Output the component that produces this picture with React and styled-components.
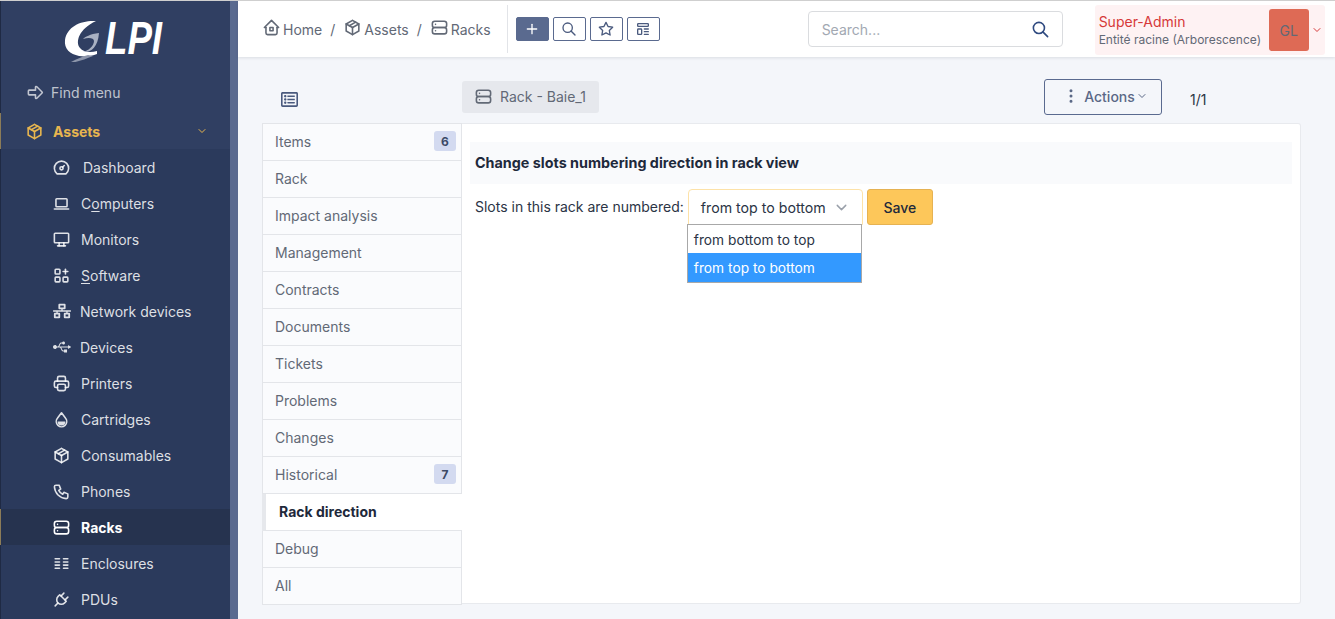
import React from 'react';
import styled, { createGlobalStyle } from 'styled-components';
import {
  TbHome2, TbPackage, TbServer, TbArrowBigRight, TbDashboard, TbDeviceLaptop, TbDeviceDesktop,
  TbApps, TbPrinter, TbPhone, TbColumns, TbPlug, TbSearch, TbStar,
  TbTemplate, TbDotsVertical, TbChevronDown, TbPlus,
} from 'react-icons/tb';
import { FaUsb, FaNetworkWired, FaRegListAlt } from 'react-icons/fa';

const GlobalStyle = createGlobalStyle`
  html, body { margin: 0; height: 100%; overflow: hidden; }
  body { font-family: Inter, "Liberation Sans", sans-serif; font-size: 14px; color: #1e293b; background: #f4f6fa; }
  * { box-sizing: border-box; }
`;

const Page = styled.div`
  display: flex;
  height: 619px;
  border-top: 1px solid #cfcfcf;
  overflow: hidden;
`;

// ==================== Sidebar ====================
const Sidebar = styled.aside`
  width: 238px;
  flex: none;
  background: #303f62;
  border-left: 1px solid #1f2a44;
  border-right: 8px solid #5a6a8f;
  display: flex;
  flex-direction: column;
`;

const LogoBox = styled.div`
  height: 73px;
  display: flex;
  align-items: flex-start;
  padding: 17px 0 0 63px;
`;

const LogoText = styled.span`
  font-family: "Liberation Sans", sans-serif;
  font-style: italic;
  font-weight: 700;
  font-size: 47px;
  line-height: 40px;
  color: #fff;
  margin-left: -1px;
  transform: scaleX(0.78);
  transform-origin: left;
`;

const FindMenu = styled.div`
  height: 37px;
  display: flex;
  align-items: center;
  gap: 6px;
  padding-left: 25px;
  color: rgba(255, 255, 255, 0.7);
  font-size: 14px;
  svg { font-size: 19px; }
`;

const SectionRow = styled.div`
  height: 36px;
  margin-top: 2px;
  margin-left: -1px;
  display: flex;
  align-items: center;
  gap: 9px;
  padding: 0 22px 0 24px;
  color: #e8b64f;
  font-weight: 700;
  font-size: 14px;
  border-left: 1px solid #8c7c58;
  svg:first-child { font-size: 19px; }
  svg:last-child { margin-left: auto; font-size: 12px; }
`;

const SubMenu = styled.div`
  flex: 1;
  background: #2b3a5c;
`;

const MenuItem = styled.div`
  height: 36px;
  display: flex;
  align-items: center;
  padding-left: ${p => p.$pad || 51}px;
  gap: ${p => p.$gap || 10}px;
  font-size: 14px;
  color: ${p => (p.$active ? '#fff' : 'rgba(255, 255, 255, 0.85)')};
  font-weight: ${p => (p.$active ? 700 : 400)};
  background: ${p => (p.$active ? '#26334f' : 'transparent')};
  border-left: ${p => (p.$active ? '1px solid #8c7c58' : 'none')};
  margin-left: ${p => (p.$active ? '-1px' : '0')};
  svg { font-size: ${p => p.$iconSize || 19}px; flex: none; }
  u { text-underline-offset: 2px; }
`;

const DropletIcon = () => (
  <svg viewBox="0 0 24 24" width="1em" height="1em" fill="none" stroke="currentColor" strokeWidth="2" strokeLinejoin="round">
    <path d="M12 3.5 L17.2 10.5 A6.6 6.6 0 1 1 6.8 10.5 Z" />
    <path d="M7 14.5 H17 A5 5 0 0 1 12 19.5 A5 5 0 0 1 7 14.5 Z" fill="currentColor" stroke="none" />
  </svg>
);

// ==================== Header ====================
const Content = styled.div`
  flex: 1;
  min-width: 0;
  display: flex;
  flex-direction: column;
`;

const Header = styled.header`
  height: 56px;
  flex: none;
  background: #fff;
  box-shadow: 0 1px 3px rgba(30, 41, 59, 0.12);
  display: flex;
  align-items: center;
  padding-left: 24px;
  position: relative;
`;

const Breadcrumb = styled.nav`
  display: flex;
  align-items: center;
  color: #626976;
  font-size: 14px;
  gap: 8px;
  height: 48px;
  padding-right: 16px;
  border-right: 1px solid #e2e4e8;
  svg { font-size: 19px; margin-right: 2px; position: relative; top: -2px; }
`;

const Crumb = styled.span`
  display: inline-flex;
  align-items: center;
`;

const Tools = styled.div`
  display: flex;
  gap: 4px;
  margin-left: 8px;
`;

const ToolButton = styled.button`
  width: 33px;
  height: 24px;
  padding: 0;
  display: flex;
  align-items: center;
  justify-content: center;
  border-radius: 2px;
  border: 1px solid #5a6a8f;
  background: ${p => (p.$solid ? '#5a6a8f' : '#fff')};
  color: ${p => (p.$solid ? '#fff' : '#4a5a7e')};
  font-size: 16px;
`;

const SearchBox = styled.div`
  width: 255px;
  height: 36px;
  margin-left: 148px;
  border: 1px solid #dadcdf;
  border-radius: 4px;
  display: flex;
  align-items: center;
  justify-content: space-between;
  padding: 0 12px 0 13px;
  color: #a2a8b2;
  font-size: 14px;
  svg { font-size: 19px; color: #2f4a80; }
`;

const UserBox = styled.div`
  width: 230px;
  height: 50px;
  margin: 2px 0 0 32px;
  background: #fef2f3;
  border-radius: 3px;
  display: flex;
  align-items: center;
  padding-left: 4px;
`;

const UserText = styled.div`
  flex: 1;
  display: flex;
  flex-direction: column;
  gap: 1px;
  white-space: nowrap;
`;

const UserName = styled.div`
  color: #d63939;
  font-size: 14px;
  line-height: 18px;
`;

const UserEntity = styled.div`
  color: #626976;
  font-size: 12px;
  line-height: 15px;
`;

const Avatar = styled.div`
  width: 40px;
  height: 42px;
  background: #de6a55;
  border-radius: 3px;
  color: #626976;
  font-size: 14px;
  display: flex;
  align-items: center;
  justify-content: center;
`;

const UserCaret = styled.span`
  width: 16px;
  display: flex;
  justify-content: center;
  color: #d63939;
  font-size: 12px;
`;

// ==================== Main ====================
const Main = styled.main`
  flex: 1;
  padding: 22px 34px 0 24px;
  display: flex;
  flex-direction: column;
`;

const ItemBar = styled.div`
  height: 36px;
  margin-bottom: 8px;
  display: flex;
  align-items: center;
`;

const ListToggle = styled.div`
  width: 200px;
  padding: 4px 0 0 19px;
  color: #4a5a7e;
  font-size: 17px;
  display: flex;
`;

const ItemTitle = styled.div`
  height: 32px;
  width: 137px;
  background: #e6e8ed;
  border-radius: 3px;
  display: flex;
  align-items: center;
  gap: 7px;
  padding: 0 0 1px 12px;
  color: #626976;
  font-size: 14px;
  svg { font-size: 19px; }
`;

const ActionsButton = styled.button`
  width: 118px;
  height: 36px;
  margin-left: 445px;
  background: transparent;
  border: 1px solid #5a6a8f;
  border-radius: 3px;
  color: #5a6886;
  font: 500 14px Inter, sans-serif;
  display: flex;
  align-items: center;
  justify-content: center;
  padding: 0 0 2px 4px;
  svg:first-child { font-size: 18px; margin-right: 4px; }
  svg:last-child { font-size: 12px; margin-left: 1px; }
`;

const Pager = styled.div`
  margin-left: 28px;
  font-size: 14px;
  color: #2b3445;
  padding-top: 5px;
`;

const TabLayout = styled.div`
  display: flex;
`;

const TabList = styled.div`
  width: 200px;
  flex: none;
  border-radius: 3px 0 0 3px;
`;

const Tab = styled.div`
  height: ${p => (p.$first ? 38 : 37)}px;
  display: flex;
  align-items: center;
  justify-content: space-between;
  background: ${p => (p.$active ? '#fff' : '#fafbfd')};
  color: ${p => (p.$active ? '#1e293b' : '#626976')};
  font-weight: ${p => (p.$active ? 700 : 400)};
  padding: 0 5px 2px ${p => (p.$active ? 13 : 12)}px;
  border-left: ${p => (p.$active ? '4px solid #e6e8ec' : '1px solid #e3e5e9')};
  border-bottom: 1px solid #e3e5e9;
  border-top: ${p => (p.$first ? '1px solid #e3e5e9' : 'none')};
  border-right: ${p => (p.$active ? 'none' : '1px solid #e3e5e9')};
`;

const Badge = styled.span`
  min-width: 22px;
  height: 20px;
  border-radius: 3px;
  background: #d3daf0;
  color: #3c4a66;
  font-size: 12px;
  font-weight: 700;
  display: flex;
  align-items: center;
  justify-content: center;
`;

const Panel = styled.section`
  width: 839px;
  height: 481px;
  background: #fff;
  border: 1px solid #e8eaee;
  border-left: none;
  border-radius: 0 3px 3px 0;
  padding: 18px 8px 0;
`;

const PanelTitle = styled.h3`
  margin: 0;
  height: 42px;
  background: #f9fafc;
  padding: 0 0 2px 5px;
  display: flex;
  align-items: center;
  font-size: 14.35px;
  font-weight: 700;
  color: #1e293b;
`;

const FormRow = styled.div`
  display: flex;
  align-items: flex-start;
  margin-top: 5px;
  padding-left: 5px;
`;

const FormLabel = styled.label`
  line-height: 36px;
  color: #2b3445;
  margin-right: 4px;
`;

const SelectWrap = styled.div`
  position: relative;
  width: 175px;
  margin-right: 4px;
`;

const SelectControl = styled.div`
  height: 36px;
  border: 1px solid #fde2a8;
  border-radius: 4px 4px 0 0;
  display: flex;
  align-items: center;
  justify-content: space-between;
  padding: 0 12px;
  background: #fff;
  color: #2b3445;
  font-size: 14.2px;
  svg { font-size: 17px; color: #9aa0aa; }
`;

const Dropdown = styled.ul`
  position: absolute;
  top: 35px;
  left: -1px;
  width: 175px;
  margin: 0;
  padding: 0;
  list-style: none;
  background: #fff;
  border: 1px solid #a8a8a8;
  font-size: 13.75px;
`;

const Option = styled.li`
  height: ${p => p.$h}px;
  display: flex;
  align-items: center;
  padding: ${p => (p.$selected ? 0 : 1)}px 0 0 6px;
  background: ${p => (p.$selected ? '#3399ff' : '#fff')};
  color: ${p => (p.$selected ? '#fff' : '#2b3445')};
`;

const SaveButton = styled.button`
  width: 66px;
  height: 36px;
  background: #fdc75a;
  border: 1px solid #e6b252;
  border-radius: 3px;
  color: #1e293b;
  font: 500 14px Inter, sans-serif;
`;

const GlpiSwoosh = () => (
  <svg width="42" height="44" viewBox="0 0 42 44" style={{ flex: 'none' }}>
    <path d="M32 3 C18 2 3 8 1 22 C0 31 6 36 15 38 C22 39 28 38 33 36 L33 33 C26 35 19 34 16 30 C11 24 15 11 32 3 Z" fill="#fff" />
    <path d="M35 15 C26 16 21 19 19 21 C25 19 30 20 30 23 C30 28 24 33 19 34 C26 35 34 30 35 15 Z" fill="#a9b1c2" />
    <path d="M24 37 C17 39 11 42 3 46 C12 44 20 42 29 38 Z" fill="#8d96ab" />
  </svg>
);

const menu = [
  { icon: <TbDashboard />, label: 'Dashboard', gap: 12 },
  { icon: <TbDeviceLaptop />, label: <>C<u>o</u>mputers</> },
  { icon: <TbDeviceDesktop />, label: 'Monitors' },
  { icon: <TbApps />, label: <><u>S</u>oftware</> },
  { icon: <FaNetworkWired />, label: 'Network devices', pad: 52, gap: 9, iconSize: 18 },
  { icon: <FaUsb />, label: 'Devices', pad: 52, gap: 9, iconSize: 18 },
  { icon: <TbPrinter />, label: 'Printers' },
  { icon: <DropletIcon />, label: 'Cartridges' },
  { icon: <TbPackage />, label: 'Consumables' },
  { icon: <TbPhone />, label: 'Phones' },
  { icon: <TbServer />, label: 'Racks', active: true },
  { icon: <TbColumns />, label: 'Enclosures' },
  { icon: <TbPlug />, label: 'PDUs' },
];

const tabs = [
  { label: 'Items', count: 6 },
  { label: 'Rack' },
  { label: 'Impact analysis' },
  { label: 'Management' },
  { label: 'Contracts' },
  { label: 'Documents' },
  { label: 'Tickets' },
  { label: 'Problems' },
  { label: 'Changes' },
  { label: 'Historical', count: 7 },
  { label: 'Rack direction', active: true },
  { label: 'Debug' },
  { label: 'All' },
];

const App = () => (
  <>
    <GlobalStyle />
    <Page>
      <Sidebar>
        <LogoBox>
          <GlpiSwoosh />
          <LogoText>LPI</LogoText>
        </LogoBox>
        <FindMenu><TbArrowBigRight />Find menu</FindMenu>
        <SectionRow><TbPackage />Assets<TbChevronDown /></SectionRow>
        <SubMenu>
          {menu.map((item, i) => (
            <MenuItem key={i} $active={item.active} $pad={item.pad} $gap={item.gap} $iconSize={item.iconSize}>
              {item.icon}
              <span>{item.label}</span>
            </MenuItem>
          ))}
        </SubMenu>
      </Sidebar>
      <Content>
        <Header>
          <Breadcrumb>
            <Crumb><TbHome2 />Home</Crumb>
            <span>/</span>
            <Crumb><TbPackage />Assets</Crumb>
            <span>/</span>
            <Crumb><TbServer />Racks</Crumb>
          </Breadcrumb>
          <Tools>
            <ToolButton $solid><TbPlus /></ToolButton>
            <ToolButton><TbSearch /></ToolButton>
            <ToolButton><TbStar /></ToolButton>
            <ToolButton><TbTemplate /></ToolButton>
          </Tools>
          <SearchBox>Search...<TbSearch /></SearchBox>
          <UserBox>
            <UserText>
              <UserName>Super-Admin</UserName>
              <UserEntity>Entité racine (Arborescence)</UserEntity>
            </UserText>
            <Avatar>GL</Avatar>
            <UserCaret><TbChevronDown /></UserCaret>
          </UserBox>
        </Header>
        <Main>
          <ItemBar>
            <ListToggle><FaRegListAlt /></ListToggle>
            <ItemTitle><TbServer />Rack - Baie_1</ItemTitle>
            <ActionsButton><TbDotsVertical />Actions<TbChevronDown /></ActionsButton>
            <Pager>1/1</Pager>
          </ItemBar>
          <TabLayout>
            <TabList>
              {tabs.map((tab, i) => (
                <Tab key={tab.label} $first={i === 0} $active={tab.active}>
                  {tab.label}
                  {tab.count && <Badge>{tab.count}</Badge>}
                </Tab>
              ))}
            </TabList>
            <Panel>
              <PanelTitle>Change slots numbering direction in rack view</PanelTitle>
              <FormRow>
                <FormLabel>Slots in this rack are numbered:</FormLabel>
                <SelectWrap>
                  <SelectControl>from top to bottom<TbChevronDown /></SelectControl>
                  <Dropdown>
                    <Option $h={28}>from bottom to top</Option>
                    <Option $h={29} $selected>from top to bottom</Option>
                  </Dropdown>
                </SelectWrap>
                <SaveButton>Save</SaveButton>
              </FormRow>
            </Panel>
          </TabLayout>
        </Main>
      </Content>
    </Page>
  </>
);

export default App;
